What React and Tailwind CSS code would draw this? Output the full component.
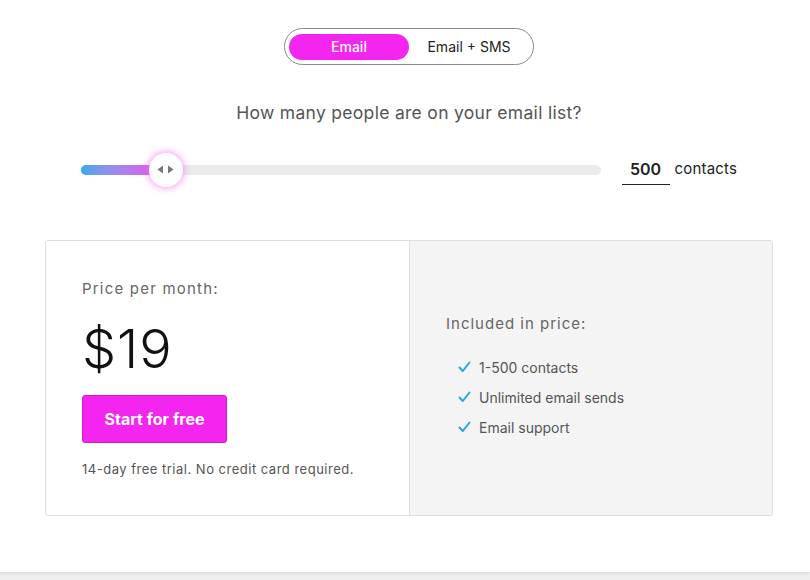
import React from "react";

function Check() {
  return (
    <svg width="13" height="12" viewBox="0 0 13 12" className="shrink-0">
      <path d="M1.5 6.5 L4.8 10 L11.5 1.5" fill="none" stroke="#2aa3e6" strokeWidth="2" strokeLinecap="round" strokeLinejoin="round" />
    </svg>
  );
}

export default function App() {
  return (
    <div className="w-[810px] h-[580px] bg-[#efefef] overflow-hidden" style={{ fontFamily: "Inter, 'Liberation Sans', sans-serif" }}>
      <div className="h-[572px] bg-white shadow-[0_1px_3px_rgba(0,0,0,0.12)] flex flex-col items-center pt-[28px] pl-[8px]">
        {/* toggle */}
        <div className="w-[250px] h-[37px] rounded-full border border-[#8a8a8a] flex items-center px-[4px]">
          <div className="w-[120px] h-[26px] rounded-full bg-[#f425ee] text-white text-[14px] font-medium flex items-center justify-center">Email</div>
          <div className="flex-1 text-center text-[14px] text-[#222]">Email + SMS</div>
        </div>

        <div className="mt-[35px] text-[17.5px] text-[#555] tracking-[0.3px]">How many people are on your email list?</div>

        {/* slider row */}
        <div className="mt-[28px] w-[729px] flex items-center">
          <div className="relative w-[520px] h-[10px] rounded-full bg-[#ebebeb] ml-[36px]">
            <div className="absolute left-0 top-0 h-[10px] w-[90px] rounded-full bg-gradient-to-r from-[#30a8ec] to-[#f025ec]"></div>
            <div className="absolute left-[68px] top-[-12px] w-[34px] h-[34px] rounded-full bg-white shadow-[0_0_6px_2px_rgba(245,120,240,0.6)] flex items-center justify-center gap-[3px]">
              <svg width="7" height="9" viewBox="0 0 7 9"><path d="M6 0.5 L0.5 4.5 L6 8.5 Z" fill="#777" /></svg>
              <svg width="7" height="9" viewBox="0 0 7 9"><path d="M1 0.5 L6.5 4.5 L1 8.5 Z" fill="#777" /></svg>
            </div>
          </div>
          <div className="ml-[21px] w-[48px] border-b border-[#222] text-center text-[16px] font-semibold text-[#222] pb-[3px] mt-[3px]">500</div>
          <div className="ml-[5px] text-[15px] text-[#222] -mt-[2px] tracking-[0.2px]">contacts</div>
        </div>

        {/* card */}
        <div className="mt-[55px] w-[728px] h-[276px] border border-[#dedede] rounded-[3px] flex overflow-hidden">
          <div className="w-[364px] bg-white border-r border-[#dedede] pl-[36px] pt-[37px]">
            <div className="text-[15px] text-[#666] tracking-[1.2px]">Price per month:</div>
            <div className="mt-[18px] text-[54px] font-light text-[#111] leading-[60px] tracking-[1px]">$19</div>
            <div className="mt-[16px] w-[145px] h-[48px] rounded-[3px] bg-[#f425ee] border border-[#d51dcf] text-white text-[16px] font-bold flex items-center justify-center">Start for free</div>
            <div className="mt-[17px] text-[13px] text-[#555] tracking-[0.5px]">14-day free trial. No credit card required.</div>
          </div>
          <div className="flex-1 bg-[#f4f4f4] pl-[36px] pt-[72px]">
            <div className="text-[15px] text-[#666] tracking-[1px]">Included in price:</div>
            <div className="mt-[22px] ml-[12px] flex flex-col gap-[11px]">
              {["1-500 contacts", "Unlimited email sends", "Email support"].map((t) => (
                <div key={t} className="flex items-center gap-[8px] text-[14px] text-[#555] h-[19px]">
                  <Check />
                  <span>{t}</span>
                </div>
              ))}
            </div>
          </div>
        </div>
      </div>
    </div>
  );
}
